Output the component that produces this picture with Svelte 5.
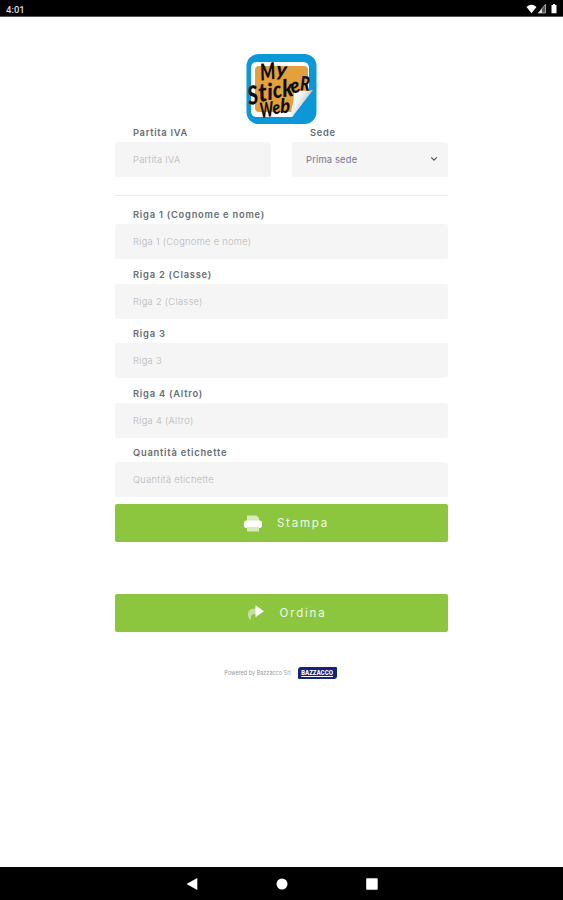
<script lang="ts">
  let partitaIva: string = '';
  let sede: string = 'Prima sede';

  let rows = [
    { id: 'riga1', label: 'Riga 1 (Cognome e nome)', value: '' },
    { id: 'riga2', label: 'Riga 2 (Classe)', value: '' },
    { id: 'riga3', label: 'Riga 3', value: '' },
    { id: 'riga4', label: 'Riga 4 (Altro)', value: '' },
    { id: 'quantita', label: 'Quantità etichette', value: '' }
  ];

  // hand lettering of the logo, one glyph at a time
  const letters = [
    { c: 'M', x: 15, y: 26.5, r: -7, s: 23, w: 0.75 },
    { c: 'y', x: 30, y: 22, r: 4, s: 20, w: 1.05 },
    { c: 'S', x: 3, y: 51, r: -8, s: 26, w: 0.75 },
    { c: 't', x: 13.5, y: 48, r: -8, s: 26, w: 0.9 },
    { c: 'i', x: 22, y: 46, r: -6, s: 23, w: 0.95 },
    { c: 'c', x: 28, y: 44.5, r: -10, s: 23, w: 0.85 },
    { c: 'k', x: 37, y: 43, r: -6, s: 24, w: 0.9 },
    { c: 'e', x: 46.5, y: 40, r: -18, s: 21, w: 0.9 },
    { c: 'R', x: 54, y: 36.5, r: 2, s: 20, w: 0.8 },
    { c: 'W', x: 15, y: 64, r: -8, s: 21, w: 0.65 },
    { c: 'e', x: 27.5, y: 60.5, r: -12, s: 18, w: 0.9 },
    { c: 'b', x: 34.5, y: 59, r: -2, s: 20, w: 0.9 }
  ];
</script>

<div class="screen">
  <header class="status">
    <span class="clock">4:01</span>
    <svg width="34" height="12" viewBox="0 0 34 12">
      <path d="M0.5 4Q5.500 -0.300 10.500 4L5.500 10.200Z" fill="#fff" />
      <path d="M19.500 1.300V10H12.300Z" fill="#555" stroke="#bbb" stroke-width="0.8" />
      <path d="M12.300 10L16 5.600V10Z" fill="#ddd" />
      <path d="M25.500 2H27V1H29V2H30.500V10.300H25.500Z" fill="#fff" />
    </svg>
  </header>

  <main>
    <svg class="logo" width="71" height="71" viewBox="0 0 71 71">
      <defs>
        <linearGradient id="curl" x1="0" y1="0" x2="1" y2="0.700">
          <stop offset="0.150" stop-color="#fff" />
          <stop offset="0.450" stop-color="#ececec" />
          <stop offset="0.700" stop-color="#c4c8ca" />
        </linearGradient>
      </defs>
      <rect x="0.500" y="0" width="70" height="70" rx="12" fill="#0b98d8" />
      <path d="M11 8H57Q63 8 63 14V40L46 63H11Q5 63 5 57V14Q5 8 11 8Z" fill="#fff" />
      <path d="M13 12H58Q62 12 62 16V36L46 58H13Q9 58 9 54V16Q9 12 13 12Z" fill="#e3a03b" />
      <path d="M67 36L46 63Q44.500 60 45.500 55Q48 48 48 39Q49 36 53 36.500Q60 37.500 67 36Z" fill="url(#curl)" />
      {#each letters as l}
        <text
          transform="translate({l.x} {l.y}) rotate({l.r}) scale({l.w} 1)"
          font-size={l.s}
        >{l.c}</text>
      {/each}
    </svg>

    <form on:submit|preventDefault>
      <div class="pair">
        <div class="field">
          <label for="iva">Partita IVA</label>
          <input id="iva" placeholder="Partita IVA" bind:value={partitaIva} />
        </div>
        <div class="field">
          <label for="sede">Sede</label>
          <button type="button" id="sede" class="select">
            <span>{sede}</span>
            <svg width="8" height="6" viewBox="0 0 8 6">
              <path d="M1.200 1.300L4 4.200L6.800 1.300" fill="none" stroke="#555" stroke-width="1.200" />
            </svg>
          </button>
        </div>
      </div>

      <hr />

      {#each rows as row}
        <div class="field row">
          <label for={row.id}>{row.label}</label>
          <input id={row.id} placeholder={row.label} bind:value={row.value} />
        </div>
      {/each}

      <button type="button" class="action">
        <svg width="18" height="17" viewBox="0 0 18 17">
          <path d="M3 6V0.500H12.500L15 3V6Z" fill="#d7ebbd" />
          <rect x="0" y="5.500" width="18" height="7.500" rx="2.500" fill="#fff" />
          <path d="M3 12H15V16.500H3Z" fill="#d7ebbd" />
        </svg>
        <span>Stampa</span>
      </button>

      <button type="button" class="action order">
        <svg width="18" height="16" viewBox="0 0 18 16">
          <path d="M9 3.500Q0.500 3 0.800 10Q1 13 4 15.300Q2.500 8.500 9 8.700Z" fill="#c3e19c" />
          <path d="M8.500 0.300L17 6.300L8.500 12.300Z" fill="#fff" />
        </svg>
        <span>Ordina</span>
      </button>
    </form>

    <div class="powered">
      <span>Powered by Bazzacco Srl</span>
      <b>BAZZACCO</b>
    </div>
  </main>

  <nav>
    <svg width="14" height="14" viewBox="0 0 14 14"><path d="M1.500 7L12.300 1V13Z" fill="#fff" /></svg>
    <svg width="14" height="14" viewBox="0 0 14 14"><circle cx="7" cy="7" r="5.500" fill="#fff" /></svg>
    <svg width="14" height="14" viewBox="0 0 14 14"><rect x="1.200" y="1.200" width="11.500" height="11.500" rx="0.800" fill="#fff" /></svg>
  </nav>
</div>

<style>
  .screen {
    display: flex;
    flex-direction: column;
    width: 563px;
    height: 900px;
    background: #fff;
    font-family: Inter, 'Open Sans', sans-serif;
    color: #666d73;
    overflow: hidden;
  }

  .status {
    display: flex;
    justify-content: space-between;
    align-items: center;
    box-sizing: border-box;
    height: 17px;
    padding: 2px 3px 0 6px;
    background: #000;
    border-bottom: 1px solid #555;
  }

  .clock {
    color: #ddd;
    font: 500 9.5px Roboto, sans-serif;
  }

  main {
    flex: 1;
    display: flex;
    flex-direction: column;
    align-items: center;
    padding-top: 36.5px;
  }

  .logo {
    display: block;
    overflow: visible;
  }

  .logo text {
    font-family: Lato, sans-serif;
    font-weight: 900;
    font-style: italic;
    fill: #0c0c0c;
  }

  form {
    width: 333px;
  }

  .pair {
    display: grid;
    grid-template-columns: 156px 156px;
    justify-content: space-between;
  }

  label {
    display: block;
    height: 17px;
    padding-left: 18px;
    font-size: 9.300px;
    line-height: 16.500px;
    font-weight: 600;
    letter-spacing: 0.780px;
    white-space: nowrap;
  }

  .pair label {
    letter-spacing: 0.700px;
  }

  input,
  .select {
    display: flex;
    width: 100%;
    height: 35px;
    padding: 0 18px;
    box-sizing: border-box;
    border: 0;
    border-radius: 3px;
    background: #f5f5f5;
    font-family: inherit;
    font-size: 9.300px;
    outline: none;
  }

  input::placeholder {
    color: #b7b7b7;
    opacity: 1;
    font-weight: 300;
    letter-spacing: 0.300px;
  }

  .select {
    align-items: center;
    justify-content: space-between;
    padding: 0 10px 0 14px;
    color: #77738c;
    letter-spacing: 0.200px;
  }

  hr {
    height: 1px;
    margin: 18px 0 11.800px;
    border: 0;
    background: #ebebeb;
  }

  .row {
    height: 59.450px;
  }

  .action {
    display: flex;
    align-items: center;
    justify-content: center;
    gap: 15px;
    width: 333px;
    height: 38px;
    margin-top: -0.500px;
    padding: 1px 0 0 10px;
    border: 0;
    border-radius: 2px;
    background: #8cc63f;
    color: #f0f8e5;
    font-family: inherit;
    font-size: 11.500px;
    letter-spacing: 1.800px;
  }

  .order {
    margin-top: 52px;
  }

  .powered {
    display: flex;
    align-items: center;
    justify-content: center;
    gap: 7px;
    margin-top: 35px;
    margin-right: 2px;
    color: #999;
    font-size: 5.500px;
  }

  .powered b {
    width: 39px;
    height: 12px;
    border-radius: 3px 1px 3px 1px;
    background: #13247c;
    color: #fff;
    font-size: 5.500px;
    font-weight: 800;
    line-height: 12px;
    text-align: center;
    text-decoration: underline;
  }

  nav {
    display: flex;
    align-items: center;
    justify-content: center;
    gap: 76px;
    box-sizing: border-box;
    height: 33px;
    background: #000;
  }
</style>
